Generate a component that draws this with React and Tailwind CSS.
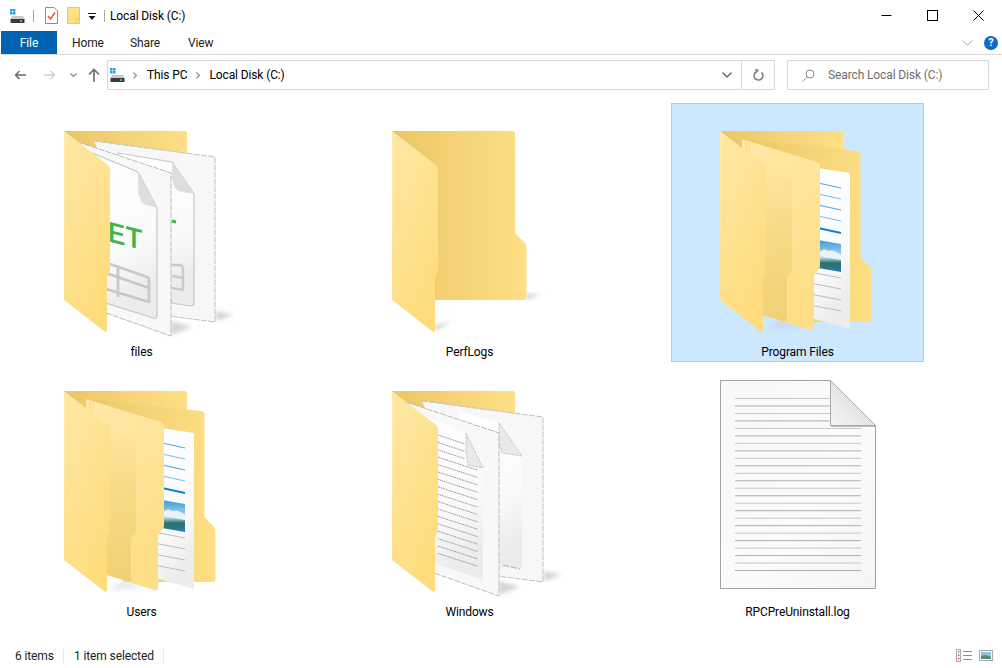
import React from 'react'

const font = { fontFamily: 'Roboto, "Noto Sans", sans-serif', letterSpacing: '-0.12px' }

function GradientDefs() {
  return (
    <svg className="block h-0 w-0">
      <defs>
        <linearGradient id="backG" x1="0" x2="1" y1="0" y2="0">
          <stop offset="0" stopColor="#eac665" />
          <stop offset="0.55" stopColor="#f6d478" />
          <stop offset="1" stopColor="#fedf85" />
        </linearGradient>
        <linearGradient id="flapG" x1="0" x2="0.55" y1="0" y2="1">
          <stop offset="0" stopColor="#ffe9a8" />
          <stop offset="1" stopColor="#fedc7c" />
        </linearGradient>
        <linearGradient id="midG" x1="0" x2="0.3" y1="0" y2="1">
          <stop offset="0" stopColor="#ffe9a8" />
          <stop offset="1" stopColor="#fedf88" />
        </linearGradient>
        <linearGradient id="shadeG" x1="0" x2="0" y1="0" y2="1">
          <stop offset="0" stopColor="#e8c565" stopOpacity="0" />
          <stop offset="0.4" stopColor="#e8c565" stopOpacity="0.3" />
          <stop offset="1" stopColor="#e8c565" stopOpacity="0.55" />
        </linearGradient>
        <linearGradient id="pageG" x1="0" x2="0.3" y1="0" y2="1">
          <stop offset="0" stopColor="#ffffff" />
          <stop offset="0.7" stopColor="#fafafa" />
          <stop offset="1" stopColor="#ececec" />
        </linearGradient>
        <linearGradient id="docG" x1="0" x2="1" y1="0" y2="1">
          <stop offset="0" stopColor="#f7f8f9" />
          <stop offset="0.6" stopColor="#fbfbfc" />
          <stop offset="1" stopColor="#f3f4f5" />
        </linearGradient>
        <linearGradient id="foldG" x1="0" x2="1" y1="1" y2="0">
          <stop offset="0" stopColor="#f4f4f4" />
          <stop offset="1" stopColor="#d6d6d6" />
        </linearGradient>
        <linearGradient id="skyG" x1="0" x2="0" y1="0" y2="1">
          <stop offset="0" stopColor="#3f9ad8" />
          <stop offset="0.55" stopColor="#b5dbf0" />
          <stop offset="0.72" stopColor="#2f6f68" />
          <stop offset="1" stopColor="#2a7cb8" />
        </linearGradient>
        <filter id="soft" x="-30%" y="-30%" width="160%" height="160%">
          <feGaussianBlur stdDeviation="2" />
        </filter>
      </defs>
    </svg>
  )
}

const flapPath = 'M0 0 L44 34 Q46 36 46 38 L46 139 Q46 141 44 144 Q43 146 43 148 L43 199 Q43 202 40 200 L0 169 Z'
const backPath = 'M0 0 H120 Q123 0 123 3 V102 L133 112 Q134.5 114 134.5 116 V166 Q134.5 169 131 169 H30 L0 169 Z'

function IconSvg({ children }) {
  return (
    <svg width="251" height="240" viewBox="-48 -27 251 240" className="block">
      {children}
    </svg>
  )
}

function Flap() {
  return (
    <g>
      <path d={flapPath} fill="url(#flapG)" />
      <path d="M4 5 V169 M6 7 V170" stroke="#fdd97a" strokeOpacity="0.45" strokeWidth="0.8" />
    </g>
  )
}

function EmptyFolder() {
  return (
    <IconSvg>
      <path d="M43 200 L60 190 L43 194 Z" fill="#d2d2d2" filter="url(#soft)" />
      <path d="M134 169 L150 163 L134 163 Z" fill="#d2d2d2" filter="url(#soft)" />
      <path d={backPath} fill="url(#backG)" />
      <Flap />
    </IconSvg>
  )
}

function DocsFolder() {
  const blue = [53, 64, 75, 86]
  const gray = [142, 153, 164, 175]
  return (
    <IconSvg>
      <path d="M44 199 L80 197 L60 189 Z" fill="#b9cbd8" opacity="0.4" filter="url(#soft)" />
      <path d="M0 0 H120 Q123 0 123 3 V24 H0 Z" fill="url(#backG)" />
      <path
        d="M22 8 L137 20 Q140.5 20.5 140.5 24 V126 L150 136 Q151.5 138 151.5 140 V188 Q151.5 191 148 191 L60 191 L22 100 Z"
        fill="url(#backG)"
      />
      <path d="M98 37 L130 42 V198 L88 186 L90 100 Z" fill="url(#pageG)" />
      {blue.map((y, i) => (
        <path key={y} d={`M98 ${y - 1} L121 ${y + 4}`} stroke={i % 2 ? '#7cc0ee' : '#4ea8e6'} strokeWidth="1.1" />
      ))}
      <path d="M98 97 L121 102" stroke="#0b84d8" strokeWidth="2" />
      <path d="M98 109 L121 113 V141 L98 137 Z" fill="url(#skyG)" />
      <path d="M98 122 Q104 116 108 120 Q114 118 121 124 V129 L98 125 Z" fill="#e8f4fa" />
      {gray.map((y) => (
        <path key={y} d={`M90 ${y - 1} L121 ${y + 5}`} stroke="#bdbdbd" strokeWidth="1" />
      ))}
      <path
        d="M22 8 L97 31 Q100 32 100 35 L100 135 Q100 137 97 140 Q94 142 94 145 L94 197 Q94 200 90 199 L43 184 L22 120 Z"
        fill="url(#midG)"
      />
      <path d="M44 35 L72 50 V139 Q72 141 69 144 Q67 146 67 148 V191 L42 184 Z" fill="url(#shadeG)" />
      <path d="M26 10 V20 M29 11 V21" stroke="#f3d27a" strokeWidth="0.8" />
      <Flap />
    </IconSvg>
  )
}

function PaperPages({ children }) {
  return (
    <g>
      <path d="M107 204 L128 196 L107 190 Z" fill="#d4d4d4" filter="url(#soft)" />
      <path d="M152 190 L170 184 L152 180 Z" fill="#d4d4d4" filter="url(#soft)" />
      <path d="M0 0 H120 Q123 0 123 3 V24 H0 Z" fill="url(#backG)" />
      <path d="M30 10 L151 26 V191 L105 185 Z" fill="#f7f7f7" />
      <path d="M30 10 L151 26 V191 L105 185" fill="none" stroke="#c2c2c2" strokeDasharray="6 1.2" />
      {children[0]}
      <path d="M14 11 L107 42 V205 L42 182 Z" fill="#f8f8f8" />
      <path d="M14 11 L107 42 V205 L42 182" fill="none" stroke="#bcbcbc" strokeDasharray="6 1.2" />
      {children[1]}
      <Flap />
    </g>
  )
}

function SheetFolder() {
  return (
    <IconSvg>
      <PaperPages>
        <g>
          <path d="M54 22 L108 31 L130 63 V172 Q130 175 126 175 L108 172 Z" fill="url(#pageG)" stroke="#c8c8c8" strokeWidth="1.2" />
          <path d="M108 31 L130 63 L114 60 Q109 56 108 46 Z" fill="#dddddd" />
          <path d="M108 90 L112 91" stroke="#43b649" strokeWidth="3" />
          <path d="M108 134 H116 Q119 135 119 138 V160 M108 145 L119 147 M108 157 L119 159" stroke="#cbcbcb" strokeWidth="2.6" fill="none" />
        </g>
        <g>
          <path d="M16 17 L72 40 Q74 41 75 43 L93 77 V184 Q93 188 89 187 L42 172 Z" fill="url(#pageG)" stroke="#c6c6c6" strokeWidth="1.2" />
          <path d="M74 41 L93 77 L79 73 Q74 66 74 56 Z" fill="#dedede" />
          <text
            transform="translate(44 110) skewY(14)"
            fontFamily='"Liberation Mono", monospace'
            fontSize="29"
            stroke="#3fb549"
            strokeWidth="0.7"
            fill="#3fb549"
          >
            ET
          </text>
          <path
            d="M46 133 L83 146 Q85 147 85 149 V172 M42 142 L85 157 M42 158 L85 171 M54 137 V166"
            stroke="#c8c8c8"
            strokeWidth="2.8"
            fill="none"
          />
        </g>
      </PaperPages>
    </IconSvg>
  )
}

function TextFolder() {
  const lines = Array.from({ length: 17 }, (_, i) => 44 + i * 7.4)
  return (
    <IconSvg>
      <PaperPages>
        <g>
          <path d="M66 20 L107 32 L130 65 V178 L108 176 Z" fill="url(#pageG)" />
          <path d="M107 32 L130 65 L110 62 L107 52 Z" fill="#e9e9e9" stroke="#c0c0c0" strokeDasharray="3 1" strokeWidth="0.8" />
          <path d="M111 174 L128 178" stroke="#b0b0b0" strokeDasharray="6 2" strokeWidth="1" />
        </g>
        <g>
          <path d="M18 18 L74 42 L91 77 V189 L42 172 Z" fill="url(#pageG)" />
          <path d="M74 42 L91 77 L76 74 L74 60 Z" fill="#e9e9e9" stroke="#bdbdbd" strokeDasharray="3 1" strokeWidth="0.8" />
          {lines.map((y, i) => (
            <path
              key={y}
              d={y < 60 ? `M46 ${y} L73 ${y + 9}` : `M46 ${y} L86 ${y + 13}`}
              stroke="#9d9d9d"
              strokeWidth="1"
              strokeDasharray={i % 2 ? '2 0.8' : '1.4 0.6'}
            />
          ))}
        </g>
      </PaperPages>
    </IconSvg>
  )
}

function LogFile() {
  const lines = Array.from({ length: 24 }, (_, i) => 7.5 + i * 7.48)
  return (
    <IconSvg>
      <path d="M0.5 -10.5 H110.5 L155.5 34.5 V197.5 H0.5 Z" fill="url(#docG)" stroke="#a2a2a2" />
      {lines.map((y, i) => (
        <path
          key={y}
          d={`M15 ${y} H${i < 4 ? 110 : 141}`}
          stroke={i % 2 ? '#aeaeae' : '#c6c8c8'}
          strokeWidth="1"
        />
      ))}
      <path d="M110.5 -10.5 L155.5 34.5 H110.5 Z" fill="url(#foldG)" stroke="#a9a9a9" />
      <path d="M111 35.5 H155" stroke="#bdbdbd" strokeWidth="1" />
    </IconSvg>
  )
}

function DriveIcon() {
  return (
    <svg width="15" height="14" viewBox="0 0 15 14" className="block shrink-0">
      <rect x="0" y="0" width="2.5" height="2.5" fill="#1aa1e8" />
      <rect x="3" y="0" width="2.5" height="2.5" fill="#1aa1e8" />
      <rect x="0" y="3" width="2.5" height="2.5" fill="#1aa1e8" />
      <rect x="3" y="3" width="2.5" height="2.5" fill="#1aa1e8" />
      <path d="M2 7 H13 L14.5 10 H0.5 Z" fill="#c9c9c9" />
      <rect x="0.5" y="10" width="14" height="4" fill="#3a3a3a" />
      <rect x="10" y="11" width="2" height="2" fill="#3fd14a" />
    </svg>
  )
}

function Item({ label, selected, children }) {
  return (
    <div className={`h-[259px] border ${selected ? 'border-[#99d1ff] bg-[#cce8ff]' : 'border-transparent'}`}>
      {children}
      <div className="h-[16px] text-center text-[12px] leading-[16px] text-black">{label}</div>
    </div>
  )
}

export default function App() {
  return (
    <div style={font} className="flex h-[668px] w-[1002px] flex-col overflow-hidden bg-white text-[12px] text-black">
      {/* title bar */}
      <div className="flex h-[31px] items-center">
        <div className="ml-[10px]"><DriveIcon /></div>
        <div className="ml-[8px] h-[12px] w-px bg-[#a8a8a8]" />
        <svg width="13" height="17" viewBox="0 0 13 17" className="ml-[11px] block">
          <path d="M0.5 0.5 H9 L12.5 4 V16.5 H0.5 Z" fill="#fff" stroke="#8c8c8c" />
          <path d="M3 9 L5.5 12 L10 5.5" fill="none" stroke="#e2552b" strokeWidth="1.4" />
        </svg>
        <svg width="13" height="17" viewBox="0 0 13 17" className="ml-[9px] block">
          <path d="M0.5 0.5 H12.5 V16.5 H0.5 Z" fill="#fddf85" stroke="#e8c765" />
          <path d="M9 16 V12 H12" fill="none" stroke="#e8c765" />
        </svg>
        <svg width="8" height="7" viewBox="0 0 8 7" className="ml-[8px] mt-[2px] block">
          <path d="M0 0 H8 V1 H0 Z M0.5 3 H7.5 L4 7 Z" fill="#1a1a1a" />
        </svg>
        <div className="ml-[8px] h-[12px] w-px bg-[#a8a8a8]" />
        <span className="ml-[5px]">Local Disk (C:)</span>
        <div className="ml-auto flex items-center">
          <svg width="11" height="11" viewBox="0 0 11 11" className="mr-[35px] block">
            <path d="M0.5 5.5 H10.5" stroke="#000" />
          </svg>
          <svg width="11" height="11" viewBox="0 0 11 11" className="mr-[35px] block">
            <rect x="0.5" y="0.5" width="10" height="10" fill="none" stroke="#000" />
          </svg>
          <svg width="11" height="11" viewBox="0 0 11 11" className="mr-[18px] block">
            <path d="M0.5 0.5 L10.5 10.5 M10.5 0.5 L0.5 10.5" stroke="#000" strokeWidth="1" />
          </svg>
        </div>
      </div>

      {/* ribbon tabs */}
      <div className="flex h-[24px] items-stretch border-b border-[#dadbdc] pl-[1px]">
        <div className="flex w-[56px] items-center justify-center bg-[#0063b1] pt-[1px] text-white">File</div>
        <div className="ml-[15px] flex w-[31px] items-center pt-[1px] text-[#222]">Home</div>
        <div className="ml-[27px] flex w-[31px] items-center pt-[1px] text-[#222]">Share</div>
        <div className="ml-[27px] flex items-center pt-[1px] text-[#222]">View</div>
        <div className="ml-auto flex items-center">
          <svg width="11" height="6" viewBox="0 0 11 6" className="mr-[11px] block">
            <path d="M0.5 0.5 L5.5 5 L10.5 0.5" fill="none" stroke="#a9a9a9" />
          </svg>
          <div className="mr-[4px] flex h-[14px] w-[14px] items-center justify-center rounded-full bg-[#0a6cc4] text-[11px] font-bold leading-none text-white">?</div>
        </div>
      </div>

      {/* address row */}
      <div className="mt-[5px] flex h-[30px] items-stretch">
        <div className="flex w-[107px] items-center">
          <svg width="12" height="10" viewBox="0 0 12 10" className="ml-[14px] block">
            <path d="M12 5 H1.5 M5.5 1 L1.5 5 L5.5 9" fill="none" stroke="#6d6d6d" strokeWidth="1.5" />
          </svg>
          <svg width="12" height="10" viewBox="0 0 12 10" className="ml-[18px] block">
            <path d="M0 5 H10.5 M6.5 1 L10.5 5 L6.5 9" fill="none" stroke="#d0d0d0" strokeWidth="1.5" />
          </svg>
          <svg width="7" height="5" viewBox="0 0 7 5" className="ml-[14px] block">
            <path d="M0.5 0.5 L3.5 3.5 L6.5 0.5" fill="none" stroke="#8a8a8a" strokeWidth="1.2" />
          </svg>
          <svg width="12" height="14" viewBox="0 0 12 14" className="ml-[11px] block">
            <path d="M6 14 V2 M1 6.5 L6 1.5 L11 6.5" fill="none" stroke="#6d6d6d" strokeWidth="1.6" />
          </svg>
        </div>
        <div className="flex w-[668px] items-center border border-[#d9d9d9]">
          <div className="ml-[2px]"><DriveIcon /></div>
          <svg width="4" height="7" viewBox="0 0 4 7" className="ml-[8px] block">
            <path d="M0.5 0.5 L3.5 3.5 L0.5 6.5" fill="none" stroke="#8a8a8a" strokeWidth="1.1" />
          </svg>
          <span className="ml-[10px]">This PC</span>
          <svg width="4" height="7" viewBox="0 0 4 7" className="ml-[9px] block">
            <path d="M0.5 0.5 L3.5 3.5 L0.5 6.5" fill="none" stroke="#8a8a8a" strokeWidth="1.1" />
          </svg>
          <span className="ml-[9px]">Local Disk (C:)</span>
          <div className="ml-auto flex h-full items-center">
            <svg width="10" height="6" viewBox="0 0 10 6" className="mr-[9px] block">
              <path d="M0.5 0.5 L5 5 L9.5 0.5" fill="none" stroke="#6d6d6d" strokeWidth="1.5" />
            </svg>
            <div className="flex h-full w-[33px] items-center justify-center border-l border-[#d9d9d9]">
              <svg width="11" height="12" viewBox="0 0 11 12" className="block">
                <path d="M3 3 A4.4 4.4 0 1 0 8.5 3.4" fill="none" stroke="#7d7d7d" strokeWidth="1.6" />
                <path d="M2 0 L6 0.5 L3.5 4.5 Z" fill="#7d7d7d" />
              </svg>
            </div>
          </div>
        </div>
        <div className="ml-[12px] flex w-[202px] items-center border border-[#d9d9d9] text-[#6d6d6d]">
          <svg width="13" height="13" viewBox="0 0 13 13" className="ml-[14px] block">
            <circle cx="8" cy="5" r="4" fill="none" stroke="#8c8c8c" />
            <path d="M5.2 8 L0.5 12.5" stroke="#b08a8a" />
          </svg>
          <span className="ml-[13px]">Search Local Disk (C:)</span>
        </div>
      </div>

      {/* icon area */}
      <div className="flex-1 pl-[15px] pt-[13px]">
        <GradientDefs />
        <div className="grid grid-cols-[repeat(3,253px)] gap-x-[75px] gap-y-[1px]">
          <Item label="files"><SheetFolder /></Item>
          <Item label="PerfLogs"><EmptyFolder /></Item>
          <Item label="Program Files" selected><DocsFolder /></Item>
          <Item label="Users"><DocsFolder /></Item>
          <Item label="Windows"><TextFolder /></Item>
          <Item label="RPCPreUninstall.log"><LogFile /></Item>
        </div>
      </div>

      {/* status bar */}
      <div className="flex h-[27px] items-center pl-[15px] pt-[2px] text-[#222]">
        <span className="w-[48px]">6 items</span>
        <div className="h-[14px] w-px bg-[#e6e6e6]" />
        <span className="ml-[10px] w-[89px]">1 item selected</span>
        <div className="h-[14px] w-px bg-[#e6e6e6]" />
        <div className="ml-auto flex items-center pr-[9px]">
          <svg width="16" height="13" viewBox="0 0 16 13" className="block">
            <rect x="0.5" y="0.5" width="4" height="12" fill="#fff" stroke="#a8a8a8" />
            <rect x="2" y="2" width="1.5" height="1.5" fill="#4caf50" />
            <rect x="2" y="5.5" width="1.5" height="1.5" fill="#3f8fe0" />
            <rect x="2" y="9" width="1.5" height="1.5" fill="#e04545" />
            <path d="M7 2.5 H16 M7 6.5 H16 M7 10.5 H16" stroke="#8c8c8c" />
          </svg>
          <svg width="14" height="11" viewBox="0 0 14 11" className="ml-[7px] block">
            <rect x="0.5" y="0.5" width="13" height="10" fill="#fff" stroke="#a8a8a8" />
            <rect x="2" y="2" width="10" height="7" fill="#8cc3e6" />
            <path d="M2 9 V6 L7 5 L12 7 V9 Z" fill="#4d8a75" />
          </svg>
        </div>
      </div>
    </div>
  )
}
